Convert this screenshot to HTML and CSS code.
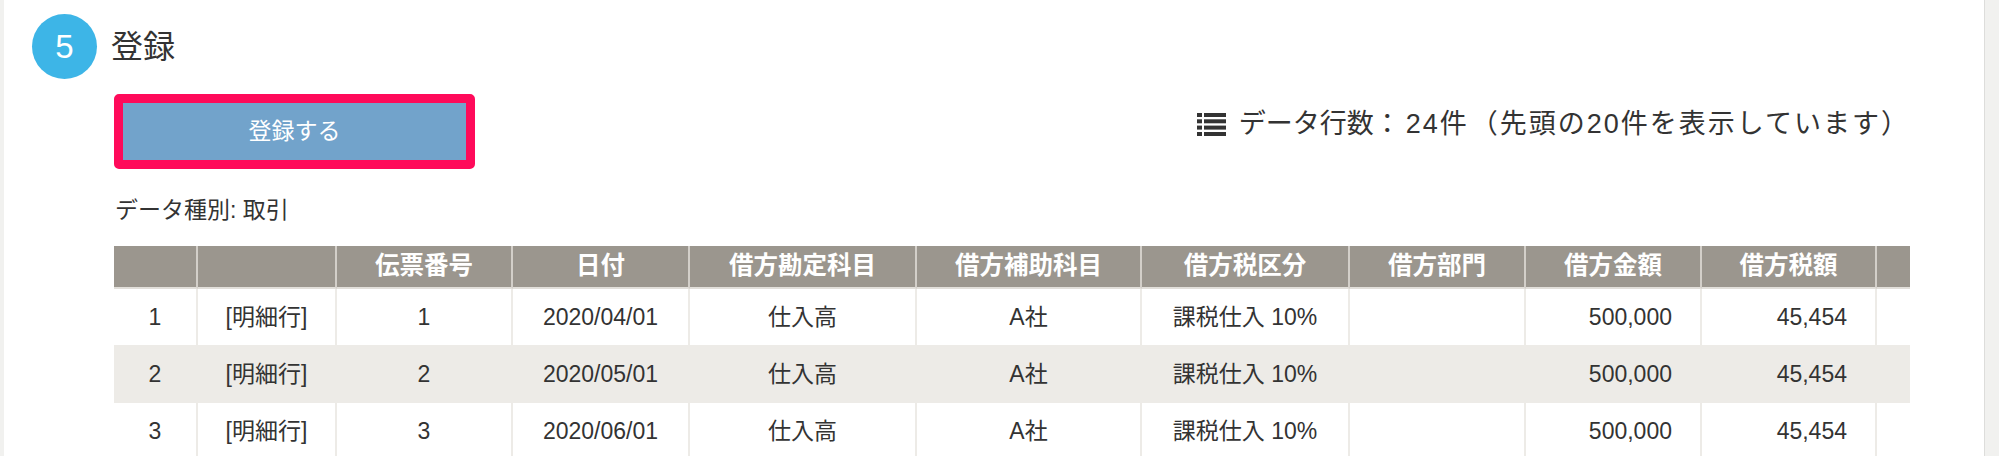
FILE: index.html
```html
<!DOCTYPE html>
<html lang="ja">
<head>
<meta charset="utf-8">
<title>登録</title>
<link rel="stylesheet" href="styles.css">
</head>
<body>
<div class="page">
  <div class="section-head">
    <div class="step">5</div>
    <h2 class="title">登録</h2>
  </div>
  <div class="section-body">
    <div class="toolbar">
      <button class="register-btn" type="button">登録する</button>
      <div class="row-count">
        <svg class="list-icon" width="29" height="23" viewBox="0 0 29 23" aria-hidden="true">
          <rect x="0" y="0" width="5" height="4"/><rect x="7" y="0" width="22" height="4"/>
          <rect x="0" y="6.3" width="5" height="4"/><rect x="7" y="6.3" width="22" height="4"/>
          <rect x="0" y="12.6" width="5" height="4"/><rect x="7" y="12.6" width="22" height="4"/>
          <rect x="0" y="19" width="5" height="4"/><rect x="7" y="19" width="22" height="4"/>
        </svg>
        <span class="count-text"><span class="count-label">データ行数：</span><span class="count-num">24</span><span class="count-unit">件</span><span class="count-note">（先頭の20件を表示しています）</span></span>
      </div>
    </div>
    <p class="data-kind">データ種別: 取引</p>
    <div class="table-scroll">
      <table class="data-table">
        <colgroup>
          <col class="w84"><col class="w139"><col class="w176"><col class="w177"><col class="w227"><col class="w225"><col class="w208"><col class="w176"><col class="w176"><col class="w175"><col class="w227">
        </colgroup>
        <thead>
          <tr>
            <th></th><th></th><th>伝票番号</th><th>日付</th><th>借方勘定科目</th><th>借方補助科目</th><th>借方税区分</th><th>借方部門</th><th>借方金額</th><th>借方税額</th><th></th>
          </tr>
        </thead>
        <tbody>
          <tr>
            <td>1</td><td>[明細行]</td><td>1</td><td>2020/04/01</td><td>仕入高</td><td>A社</td><td>課税仕入 10%</td><td></td><td class="num">500,000</td><td class="num">45,454</td><td></td>
          </tr>
          <tr>
            <td>2</td><td>[明細行]</td><td>2</td><td>2020/05/01</td><td>仕入高</td><td>A社</td><td>課税仕入 10%</td><td></td><td class="num">500,000</td><td class="num">45,454</td><td></td>
          </tr>
          <tr>
            <td>3</td><td>[明細行]</td><td>3</td><td>2020/06/01</td><td>仕入高</td><td>A社</td><td>課税仕入 10%</td><td></td><td class="num">500,000</td><td class="num">45,454</td><td></td>
          </tr>
        </tbody>
      </table>
    </div>
  </div>
</div>
</body>
</html>
```

FILE: styles.css
```css
html, body {
  margin: 0;
  padding: 0;
}
body {
  background: #f1f1ef;
  font-family: "Liberation Sans", "Noto Sans CJK JP", sans-serif;
  color: #333333;
  height: 456px;
  overflow: hidden;
}
.page {
  margin: 0 14px 0 4px;
  background: #ffffff;
  border-right: 1px solid #dddddb;
  height: 456px;
  overflow: hidden;
}
.section-head {
  display: flex;
  align-items: center;
  gap: 14px;
  padding: 14px 0 0 28px;
}
.step {
  width: 65px;
  height: 65px;
  border-radius: 50%;
  background: #3db5e7;
  color: #ffffff;
  font-size: 33px;
  display: flex;
  align-items: center;
  justify-content: center;
  line-height: 1;
}
.title {
  margin: 0;
  font-size: 32px;
  font-weight: normal;
  line-height: 1;
  color: #333333;
}
.section-body {
  margin-left: 110px;
  width: 1796px;
}
.toolbar {
  display: flex;
  justify-content: space-between;
  align-items: flex-start;
  margin-top: 15px;
}
.register-btn {
  box-sizing: border-box;
  width: 361px;
  height: 75px;
  border: 9px solid #ff0a5a;
  border-radius: 5px;
  background: #72a3cb;
  color: #ffffff;
  font-family: inherit;
  font-size: 23px;
  line-height: 1;
  padding: 0;
}
.row-count {
  display: flex;
  align-items: center;
  gap: 13px;
  margin-top: 17px;
  margin-right: 0;
  font-size: 27px;
  line-height: 1;
}
.list-icon {
  fill: #333333;
}
.count-text {
  white-space: nowrap;
}
.count-num {
  margin-left: 5px;
  letter-spacing: 2px;
}
.count-unit {
  margin-right: 4px;
}
.count-note {
  letter-spacing: 2px;
}
.data-kind {
  margin: 30px 0 0 1px;
  font-size: 23px;
  line-height: 23px;
}
.table-scroll {
  margin-top: 24px;
  width: 1796px;
  overflow: hidden;
}
.data-table {
  table-layout: fixed;
  border-collapse: separate;
  border-spacing: 0;
  width: 1990px;
}
.w84 { width: 84px; }
.w139 { width: 139px; }
.w176 { width: 176px; }
.w177 { width: 177px; }
.w227 { width: 227px; }
.w225 { width: 225px; }
.w208 { width: 208px; }
.w175 { width: 175px; }
.data-table th {
  box-sizing: border-box;
  height: 43px;
  background: #9b968e;
  color: #ffffff;
  font-size: 24.5px;
  font-weight: bold;
  line-height: 1;
  text-align: center;
  white-space: nowrap;
  overflow: hidden;
  padding: 0;
  border-right: 2px solid #d3cfc9;
  border-bottom: 2px solid #e2dfda;
}
.data-table td {
  box-sizing: border-box;
  height: 57px;
  font-size: 23px;
  line-height: 1;
  text-align: center;
  white-space: nowrap;
  overflow: hidden;
  padding: 0;
  border-right: 2px solid #edebe7;
  border-bottom: 1px solid #edebe7;
}
.data-table tbody tr:nth-child(even) td {
  background: #edebe7;
}
.data-table td.num {
  text-align: right;
  padding-right: 28px;
}
```
